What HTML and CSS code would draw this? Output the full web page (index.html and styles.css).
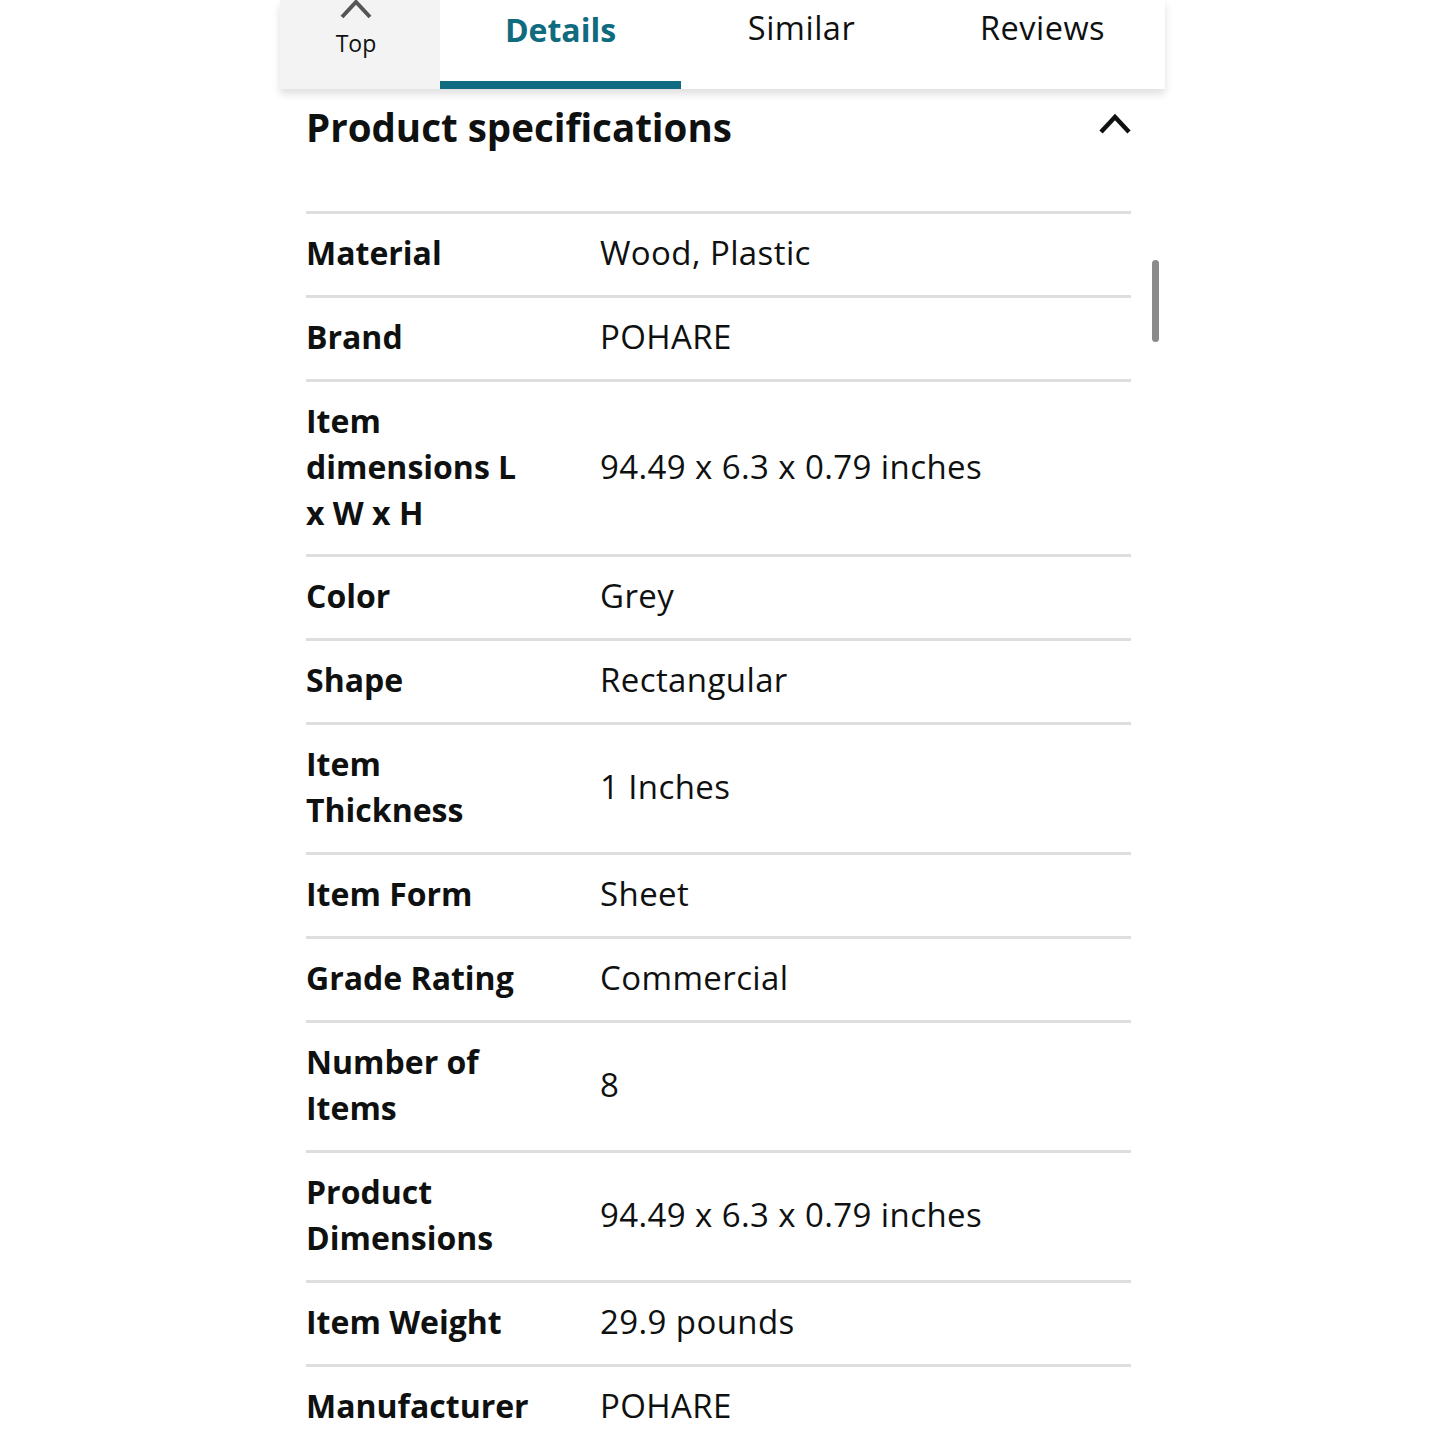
FILE: index.html
```html
<!DOCTYPE html>
<html lang="en">
<head>
<meta charset="utf-8">
<title>Product specifications</title>
<link rel="stylesheet" href="styles.css">
</head>
<body>
<div class="page">
  <nav class="tabs">
    <div class="tab tab-top">
      <svg class="top-chev" width="34" height="20" viewBox="0 0 34 20"><polyline points="3,18 17,3 31,18" fill="none" stroke="#555" stroke-width="4"/></svg>
      <span>Top</span>
    </div>
    <div class="tab tab-main active">Details</div>
    <div class="tab tab-main">Similar</div>
    <div class="tab tab-main">Reviews</div>
  </nav>
  <section class="specs">
    <div class="specs-head">
      <h2>Product specifications</h2>
      <svg class="collapse" width="34" height="24" viewBox="0 0 34 24"><polyline points="3,21 17,6 31,21" fill="none" stroke="#0f1111" stroke-width="4.5"/></svg>
    </div>
    <div class="table">
      <div class="row"><div class="label">Material</div><div class="value">Wood, Plastic</div></div>
      <div class="row"><div class="label">Brand</div><div class="value">POHARE</div></div>
      <div class="row"><div class="label">Item dimensions L x W x H</div><div class="value">94.49 x 6.3 x 0.79 inches</div></div>
      <div class="row"><div class="label">Color</div><div class="value">Grey</div></div>
      <div class="row"><div class="label">Shape</div><div class="value">Rectangular</div></div>
      <div class="row"><div class="label">Item Thickness</div><div class="value">1 Inches</div></div>
      <div class="row"><div class="label">Item Form</div><div class="value">Sheet</div></div>
      <div class="row"><div class="label">Grade Rating</div><div class="value">Commercial</div></div>
      <div class="row"><div class="label">Number of Items</div><div class="value">8</div></div>
      <div class="row"><div class="label">Product Dimensions</div><div class="value">94.49 x 6.3 x 0.79 inches</div></div>
      <div class="row"><div class="label">Item Weight</div><div class="value">29.9 pounds</div></div>
      <div class="row"><div class="label">Manufacturer</div><div class="value">POHARE</div></div>
    </div>
    <div class="scrollbar"></div>
  </section>
</div>
</body>
</html>
```

FILE: styles.css
```css
html, body {
  margin: 0;
  padding: 0;
  background: #ffffff;
}
body {
  font-family: "Open Sans", "Noto Sans", sans-serif;
  color: #0f1111;
  overflow: hidden;
}
.page {
  width: 885px;
  margin: 0 auto;
  position: relative;
}
.tabs {
  display: grid;
  grid-template-columns: 160px 241px 241px 241px;
  height: 89px;
  box-shadow: 0 5px 8px rgba(0, 0, 0, 0.13);
  position: relative;
  z-index: 2;
  background: #fff;
}
.tab {
  display: flex;
  align-items: center;
  justify-content: center;
  box-sizing: border-box;
}
.tab-top {
  background: #f3f3f3;
  flex-direction: column;
  justify-content: flex-start;
  padding-right: 8px;
  font-size: 23px;
  line-height: 28px;
}
.top-chev {
  display: block;
  margin-top: -1px;
  margin-bottom: 10px;
}
.tab-main {
  font-size: 32.5px;
  letter-spacing: 0.5px;
  padding-bottom: 33px;
  padding-top: 0;
  border-bottom: 8px solid transparent;
  align-items: flex-end;
  line-height: 40px;
}
.tab-main.active {
  color: #0f6b7e;
  font-weight: 700;
  letter-spacing: 0;
  border-bottom-color: #0e6b80;
  padding-bottom: 31px;
  font-size: 32px;
}
.specs {
  padding: 0 34px 0 26px;
  position: relative;
}
.specs-head {
  display: flex;
  justify-content: space-between;
  align-items: flex-start;
  padding-left: 0;
  margin-top: 12px;
  height: 110px;
}
.specs-head h2 {
  margin: 0;
  font-size: 38.5px;
  font-weight: 700;
  line-height: 52px;
}
.collapse {
  margin-top: 10px;
  margin-right: -1px;
}
.row {
  display: grid;
  grid-template-columns: 230px 1fr;
  column-gap: 64px;
  align-items: center;
  border-top: 3px solid #dedede;
  padding: 16px 0 19px;
  line-height: 46px;
  font-size: 32px;
}
.row:nth-child(3) {
  padding-bottom: 18px;
}
.label {
  font-weight: 700;
  padding-left: 0;
}
.value {
  font-weight: 400;
  font-size: 33px;
  letter-spacing: 0.4px;
}
.scrollbar {
  position: absolute;
  left: 872px;
  top: 159px;
  width: 7px;
  height: 82px;
  border-radius: 4px;
  background: #8a8a8a;
}
```
